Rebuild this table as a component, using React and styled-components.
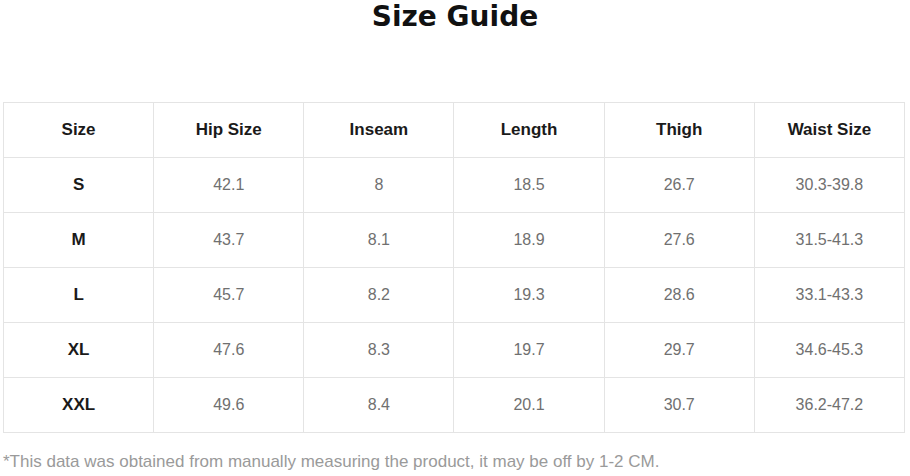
import React from "react";
import styled, { createGlobalStyle } from "styled-components";

const Global = createGlobalStyle`
  html, body { margin: 0; padding: 0; background: #ffffff; }
  body { width: 910px; height: 476px; overflow: hidden; }
`;

const Page = styled.div`
  width: 910px;
  padding: 0 5px 0 3px;
  box-sizing: border-box;
  display: flex;
  flex-direction: column;
  font-family: "Liberation Sans", Arial, sans-serif;
`;

const Title = styled.h1`
  margin: 0 0 69px;
  font-family: "DejaVu Sans", sans-serif;
  font-weight: 700;
  font-size: 28px;
  line-height: 33px;
  color: #111;
  text-align: center;
  padding-left: 2px;
`;

const Table = styled.table`
  width: 902px;
  border-collapse: collapse;
  table-layout: fixed;
`;

const Cell = styled.td`
  border: 1px solid #e4e4e4;
  height: 54px;
  padding: 0;
  text-align: center;
  vertical-align: middle;
  font-size: ${(p) => (p.$bold ? "17px" : "16px")};
  font-weight: ${(p) => (p.$bold ? 700 : 400)};
  color: ${(p) => (p.$bold ? "#1a1a1a" : "#707070")};
`;

const Note = styled.p`
  margin: 19px 0 0;
  font-size: 17px;
  line-height: 20px;
  color: #9a9a9a;
`;

const headers = ["Size", "Hip Size", "Inseam", "Length", "Thigh", "Waist Size"];
const rows = [
  ["S", "42.1", "8", "18.5", "26.7", "30.3-39.8"],
  ["M", "43.7", "8.1", "18.9", "27.6", "31.5-41.3"],
  ["L", "45.7", "8.2", "19.3", "28.6", "33.1-43.3"],
  ["XL", "47.6", "8.3", "19.7", "29.7", "34.6-45.3"],
  ["XXL", "49.6", "8.4", "20.1", "30.7", "36.2-47.2"],
];

export default function App() {
  return (
    <>
      <Global />
      <Page>
        <Title>Size Guide</Title>
        <Table>
          <tbody>
            <tr>
              {headers.map((h) => (
                <Cell key={h} $bold>
                  {h}
                </Cell>
              ))}
            </tr>
            {rows.map((r) => (
              <tr key={r[0]}>
                {r.map((v, i) => (
                  <Cell key={i} $bold={i === 0}>
                    {v}
                  </Cell>
                ))}
              </tr>
            ))}
          </tbody>
        </Table>
        <Note>
          *This data was obtained from manually measuring the product, it may be off by 1-2 CM.
        </Note>
      </Page>
    </>
  );
}
